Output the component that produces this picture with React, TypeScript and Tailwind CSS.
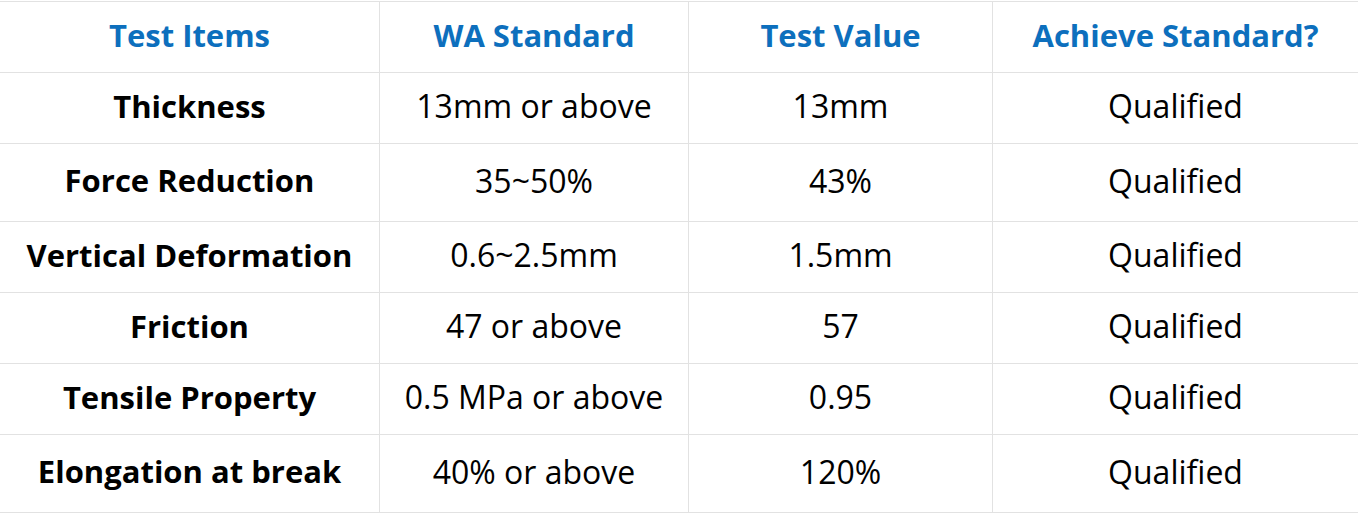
import React from "react";

const rows: { h: string; cells: string[] }[] = [
  { h: "h-[71px]", cells: ["Thickness", "13mm or above", "13mm", "Qualified"] },
  { h: "h-[78px]", cells: ["Force Reduction", "35~50%", "43%", "Qualified"] },
  { h: "h-[71px]", cells: ["Vertical Deformation", "0.6~2.5mm", "1.5mm", "Qualified"] },
  { h: "h-[71px]", cells: ["Friction", "47 or above", "57", "Qualified"] },
  { h: "h-[71px]", cells: ["Tensile Property", "0.5 MPa or above", "0.95", "Qualified"] },
  { h: "h-[78px]", cells: ["Elongation at break", "40% or above", "120%", "Qualified"] },
];

const headers = ["Test Items", "WA Standard", "Test Value", "Achieve Standard?"];
const cols = "grid grid-cols-[380px_309px_304px_1fr]";

export default function App() {
  return (
    <div
      className="w-[1358px] h-[514px] bg-white pt-px text-black"
      style={{ fontFamily: '"Open Sans", "Noto Sans", sans-serif' }}
    >
      <div className="border-t border-[#e2e2e2]">
        <div className={`${cols} h-[71px] border-b border-[#e2e2e2]`}>
          {headers.map((t, i) => (
            <div
              key={t}
              className={`flex items-center justify-center pb-1 text-[31px] font-bold text-[#0d6fbd] ${
                i < 3 ? "border-r border-[#e2e2e2]" : ""
              }`}
            >
              {t}
            </div>
          ))}
        </div>
        {rows.map((r) => (
          <div key={r.cells[0]} className={`${cols} ${r.h} border-b border-[#e2e2e2]`}>
            {r.cells.map((c, i) => (
              <div
                key={i}
                className={`flex items-center justify-center pb-1 ${
                  i === 0 ? "font-bold text-[31px]" : "font-normal text-[32px]"
                } ${i < 3 ? "border-r border-[#e2e2e2]" : ""}`}
              >
                {c}
              </div>
            ))}
          </div>
        ))}
      </div>
    </div>
  );
}
